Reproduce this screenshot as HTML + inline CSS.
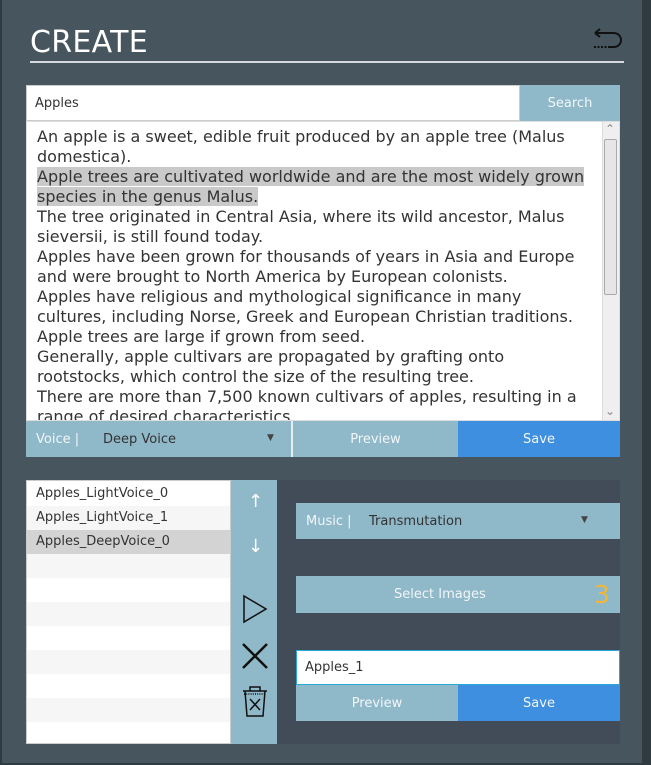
<!DOCTYPE html>
<html><head><style>
*{margin:0;padding:0;box-sizing:border-box}
body{width:651px;height:765px;background:#2f3a41;position:relative;overflow:hidden;font-family:"DejaVu Sans","Liberation Sans",sans-serif}
.a{position:absolute}
.main{left:2px;top:0;width:640px;height:763px;background:#46555e}
.txt{font-size:16px;line-height:20px;color:#333}
.btn{display:flex;align-items:center;justify-content:center;color:#f2f6f8;font-size:13px}
.hl{background:#c9c9c9}
.row{left:0;width:205px;height:24px;font-size:13px;color:#333;padding-left:9px;line-height:24px}
</style></head><body>
<div class="a main"></div>
<div class="a" style="left:30px;top:25px;color:#fff;font-size:30px;font-family:'DejaVu Sans',sans-serif;letter-spacing:0.3px">CREATE</div>
<div class="a" style="left:30px;top:61px;width:594px;height:2px;background:#d6d9db"></div>
<svg class="a" style="left:590px;top:28px" width="36" height="28" viewBox="0 0 36 28"><path d="M5 5 L10 1 M5 5 L10 9 M5 5 H24 A7 7 0 0 1 24 19 H18" fill="none" stroke="#111" stroke-width="2"/><path d="M4 19 H17" stroke="#111" stroke-width="2" stroke-dasharray="2 1.5"/></svg>
<div class="a" style="left:26px;top:85px;width:494px;height:36px;background:#fff;border:1px solid #ccc;font-size:13px;color:#333;padding:10px 0 0 8px">Apples</div>
<div class="a btn" style="left:520px;top:85px;width:100px;height:36px;background:#8fb8c9">Search</div>
<div class="a" style="left:26px;top:121px;width:594px;height:300px;background:#fff;border:1px solid #ddd;overflow:hidden">
<div class="a txt" style="left:10px;top:5px;width:556px">An apple is a sweet, edible fruit produced by an apple tree (Malus domestica).<br><span class="hl">Apple trees are cultivated worldwide and are the most widely grown species in the genus Malus. </span><br>The tree originated in Central Asia, where its wild ancestor, Malus sieversii, is still found today.<br>Apples have been grown for thousands of years in Asia and Europe and were brought to North America by European colonists.<br>Apples have religious and mythological significance in many cultures, including Norse, Greek and European Christian traditions.<br>Apple trees are large if grown from seed.<br>Generally, apple cultivars are propagated by grafting onto rootstocks, which control the size of the resulting tree.<br>There are more than 7,500 known cultivars of apples, resulting in a range of desired characteristics.</div>
<div class="a" style="left:575px;top:0;width:18px;height:300px;background:#efefef;border-left:1px solid #ddd"></div>
<div class="a" style="left:577px;top:17px;width:13px;height:156px;background:#e6e6e6;border:1px solid #aaa;border-radius:2px"></div>
<div class="a" style="left:578px;top:0;font-size:12px;color:#888">⌃</div>
<div class="a" style="left:578px;top:282px;font-size:12px;color:#888">⌄</div>
</div>
<div class="a" style="left:26px;top:421px;width:266px;height:36px;background:#8fb8c9;font-size:13px">
<span class="a" style="left:10px;top:11px;color:#f2f6f8">Voice |</span><span class="a" style="left:77px;top:11px;color:#333">Deep Voice</span><span class="a" style="left:241px;top:12px;color:#444;font-size:9px">▼</span></div>
<div class="a" style="left:291px;top:421px;width:2px;height:36px;background:#e8eef0"></div>
<div class="a btn" style="left:293px;top:421px;width:165px;height:36px;background:#8fb8c9">Preview</div>
<div class="a btn" style="left:458px;top:421px;width:162px;height:36px;background:#3f8fe0">Save</div>
<div class="a" style="left:26px;top:480px;width:205px;height:264px;background:#fff;border:1px solid #ccc;overflow:hidden">
<div class="a row" style="top:1px;background:#fff">Apples_LightVoice_0</div>
<div class="a row" style="top:25px;background:#f6f6f6">Apples_LightVoice_1</div>
<div class="a row" style="top:49px;background:#d3d3d3">Apples_DeepVoice_0</div>
<div class="a row" style="top:73px;background:#f6f6f6"></div>
<div class="a row" style="top:121px;background:#f6f6f6"></div>
<div class="a row" style="top:169px;background:#f6f6f6"></div>
<div class="a row" style="top:217px;background:#f6f6f6"></div>
</div>
<div class="a" style="left:231px;top:480px;width:46px;height:264px;background:#8fb8c9"></div>
<div class="a" style="left:248px;top:491px;color:#fff;font-size:18px">↑</div>
<div class="a" style="left:248px;top:536px;color:#fff;font-size:18px">↓</div>
<svg class="a" style="left:240px;top:592px" width="30" height="130" viewBox="0 0 30 130"><path d="M4 4 L26 17 L4 30 Z" fill="none" stroke="#111" stroke-width="1.5"/><path d="M3 52 L27 76 M27 52 L3 76" stroke="#111" stroke-width="2.5"/><path d="M3 99 H27 M10 99 V95 H20 V99 M5 99 L7 124 H23 L25 99 M10 107 L20 118 M20 107 L10 118" fill="none" stroke="#111" stroke-width="1.5"/><path d="M4 102 H26" stroke="#111" stroke-width="1.5" stroke-dasharray="1 1.2"/></svg>
<div class="a" style="left:277px;top:480px;width:343px;height:264px;background:#414c58"></div>
<div class="a" style="left:296px;top:503px;width:324px;height:36px;background:#8fb8c9;font-size:13px">
<span class="a" style="left:10px;top:11px;color:#f2f6f8">Music |</span><span class="a" style="left:73px;top:11px;color:#333">Transmutation</span><span class="a" style="left:285px;top:12px;color:#444;font-size:9px">▼</span></div>
<div class="a" style="left:296px;top:576px;width:324px;height:37px;background:#8fb8c9"></div>
<div class="a" style="left:394px;top:587px;color:#f2f6f8;font-size:13px">Select Images</div>
<div class="a" style="left:594px;top:580px;color:#f2b736;font-size:25px">3</div>
<div class="a" style="left:296px;top:650px;width:324px;height:35px;background:#fff;border:1px solid #29a8d8;font-size:13px;color:#333;padding:9px 0 0 8px">Apples_1</div>
<div class="a btn" style="left:296px;top:685px;width:162px;height:36px;background:#8fb8c9">Preview</div>
<div class="a btn" style="left:458px;top:685px;width:162px;height:36px;background:#3f8fe0">Save</div>
</body></html>
